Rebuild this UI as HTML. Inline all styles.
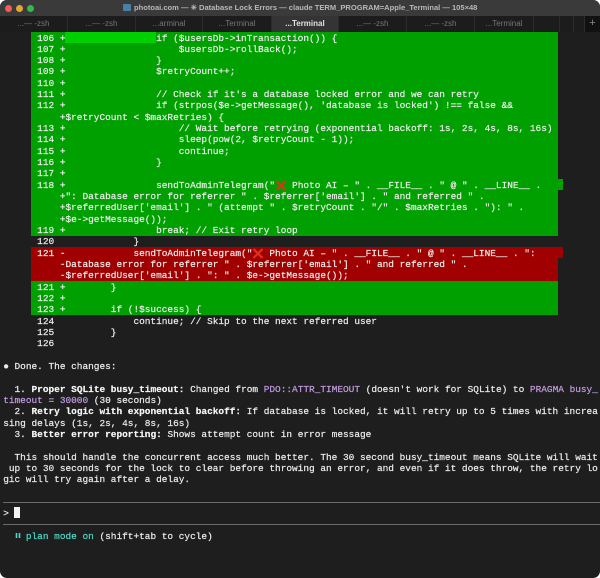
<!DOCTYPE html>
<html><head><meta charset="utf-8">
<style>
html,body{margin:0;padding:0;background:#fff}
#w{position:relative;width:600px;height:578px;overflow:hidden;background:#1e1e1e;border-radius:7px}
#title{position:absolute;left:0;top:0;width:600px;height:16px;background:#3a3a3b}
.dot{position:absolute;top:4.5px;width:7px;height:7px;border-radius:50%}
#tt{position:absolute;left:134px;top:0;font:bold 7.55px/15px "Liberation Sans",sans-serif;color:#b8b8b8;white-space:pre}
#fold{position:absolute;left:123px;top:4px;width:8px;height:7px;background:#4a7fa8;border-radius:1px}
#tabs{position:absolute;left:0;top:16px;width:600px;height:16px;background:#1c1c1d}
.t{position:absolute;top:0;height:16px;font:8px/15px "Liberation Sans",sans-serif;color:#757575;text-align:center;border-right:1px solid #2c2c2c;box-sizing:border-box;white-space:pre;overflow:hidden}
.b{position:absolute}
pre{position:absolute;left:3.2px;top:32.5px;margin:0;font:9.45px/11.333px "Liberation Mono",monospace;color:#ececec;white-space:pre;-webkit-text-stroke:.2px currentColor;filter:blur(.2px)}
b{font-weight:bold;color:#f6f6f6}
.p{color:#c39ae0}
.c{color:#4fd8c8}
.x{display:inline-block;width:11.34px;height:0;line-height:0;font-size:1px;color:transparent;position:relative;-webkit-text-stroke:0}
.x svg{position:absolute;left:0;top:-9px}
</style></head><body>
<div id="w">
<div id="title">
<div class="dot" style="left:4.5px;background:#ec5f5a"></div>
<div class="dot" style="left:15.5px;background:#e5a72e"></div>
<div class="dot" style="left:27px;background:#36b94a"></div>
<div id="fold"></div>
<div id="tt">photoai.com — ✳ Database Lock Errors — claude TERM_PROGRAM=Apple_Terminal — 105×48</div>
</div>
<div id="tabs">
<div class="t" style="left:0;width:68px">...— -zsh</div>
<div class="t" style="left:68px;width:68px">...— -zsh</div>
<div class="t" style="left:136px;width:67px">...arminal</div>
<div class="t" style="left:203px;width:69px">...Terminal</div>
<div class="t" style="left:272px;width:67px;background:#343435;color:#e2e2e2;font-weight:bold">...Terminal</div>
<div class="t" style="left:339px;width:68px">...— -zsh</div>
<div class="t" style="left:407px;width:68px">...— -zsh</div>
<div class="t" style="left:475px;width:59px">...Terminal</div>
<div class="t" style="left:534px;width:26px"></div>
<div class="t" style="left:560px;width:14px"></div>
<div class="t" style="left:574px;width:11px"></div>
<div class="t" style="left:585px;width:15px;background:#111;color:#888;font-size:11px;border:0">+</div>
</div>

<div class="b" style="left:31px;top:32px;width:527px;height:204px;background:#00a000"></div>
<div class="b" style="left:558px;top:179px;width:5px;height:11px;background:#00a000"></div>
<div class="b" style="left:65px;top:32px;width:91px;height:11px;background:#00d000"></div>
<div class="b" style="left:31px;top:247px;width:527px;height:34px;background:#a00000"></div>
<div class="b" style="left:558px;top:247px;width:5px;height:11px;background:#a00000"></div>
<div class="b" style="left:31px;top:281px;width:527px;height:34px;background:#00a000"></div>
<div class="b" style="left:3px;top:502px;width:597px;height:1px;background:#6a6a6a"></div>
<div class="b" style="left:3px;top:524px;width:597px;height:1px;background:#6a6a6a"></div>
<div class="b" style="left:14px;top:507px;width:6px;height:11px;background:#f2f2f2"></div>
<pre>      106 +                if ($usersDb-&gt;inTransaction()) {
      107 +                    $usersDb-&gt;rollBack();
      108 +                }
      109 +                $retryCount++;
      110 +
      111 +                // Check if it's a database locked error and we can retry
      112 +                if (strpos($e-&gt;getMessage(), 'database is locked') !== false &amp;&amp;
          +$retryCount &lt; $maxRetries) {
      113 +                    // Wait before retrying (exponential backoff: 1s, 2s, 4s, 8s, 16s)
      114 +                    sleep(pow(2, $retryCount - 1));
      115 +                    continue;
      116 +                }
      117 +
      118 +                sendToAdminTelegram("<span class="x">❌<svg width="12" height="11" viewBox="0 0 12 11"><path d="M1.5 1 L10.5 10 M10.5 1 L1.5 10" stroke="#e0301e" stroke-width="2.2" fill="none"/></svg></span> Photo AI – " . __FILE__ . " @ " . __LINE__ .
          +": Database error for referrer " . $referrer['email'] . " and referred " .
          +$referredUser['email'] . " (attempt " . $retryCount . "/" . $maxRetries . "): " .
          +$e-&gt;getMessage());
      119 +                break; // Exit retry loop
      120              }
      121 -            sendToAdminTelegram("<span class="x">❌<svg width="12" height="11" viewBox="0 0 12 11"><path d="M1.5 1 L10.5 10 M10.5 1 L1.5 10" stroke="#e0301e" stroke-width="2.2" fill="none"/></svg></span> Photo AI – " . __FILE__ . " @ " . __LINE__ . ":
          -Database error for referrer " . $referrer['email'] . " and referred " .
          -$referredUser['email'] . ": " . $e-&gt;getMessage());
      121 +        }
      122 +
      123 +        if (!$success) {
      124              continue; // Skip to the next referred user
      125          }
      126

● Done. The changes:

  1. <b>Proper SQLite busy_timeout:</b> Changed from <span class="p">PDO::ATTR_TIMEOUT</span> (doesn't work for SQLite) to <span class="p">PRAGMA busy_</span>
<span class="p">timeout = 30000</span> (30 seconds)
  2. <b>Retry logic with exponential backoff:</b> If database is locked, it will retry up to 5 times with increa
sing delays (1s, 2s, 4s, 8s, 16s)
  3. <b>Better error reporting:</b> Shows attempt count in error message

  This should handle the concurrent access much better. The 30 second busy_timeout means SQLite will wait
 up to 30 seconds for the lock to clear before throwing an error, and even if it does throw, the retry lo
gic will try again after a delay.


&gt;

  <span class="x"><svg width="6" height="11" viewBox="0 0 6 11"><path d="M1.5 3v5M4.5 3v5" stroke="#4fd8c8" stroke-width="1.6" fill="none"/></svg></span><span class="c">plan mode on</span> (shift+tab to cycle)</pre>
</div>
</body></html>
